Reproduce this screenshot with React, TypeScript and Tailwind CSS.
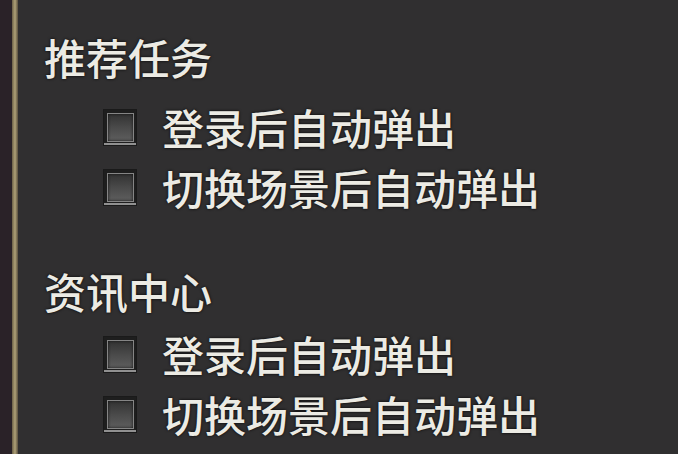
const sections = [
  { title: '推荐任务', items: ['登录后自动弹出', '切换场景后自动弹出'] },
  { title: '资讯中心', items: ['登录后自动弹出', '切换场景后自动弹出'] },
];

const Checkbox = () => (
  <span className="flex h-[37px] w-[34px] items-center justify-center border border-[#1a1a1a] bg-[#1e1e1e] shadow-[inset_0_-2px_0_#909090]">
    <span className="h-[29px] w-[27px] border border-[#858585] bg-gradient-to-b from-[#333] via-[#4a4a4a] to-[#5e5e5e] shadow-[inset_0_0_3px_#111]" />
  </span>
);

const App = () => {
  return (
    <div
      className="flex h-[454px] w-[678px] overflow-hidden bg-[#302f30] text-[#ecebe4]"
      style={{ fontFamily: '"Noto Sans CJK SC", "Noto Sans", sans-serif' }}
    >
      <div className="w-[12px] shrink-0 bg-[#2a2228]" />
      <div className="w-[6px] shrink-0 bg-gradient-to-r from-[#6b6048] via-[#b0a278] to-[#5a5040]" />
      <div className="flex flex-col pl-[26px] pt-[27px]">
        {sections.map((s, i) => (
          <div key={s.title} className={i === 0 ? '' : 'mt-[44px]'}>
            <div className="h-[60px] text-[42px] font-medium leading-[60px] [text-shadow:0_0_3px_#000]">
              {s.title}
            </div>
            <div className={i === 0 ? 'mt-[10px]' : 'mt-[3px]'}>
              {s.items.map((item) => (
                <div key={item} className="flex h-[60px] items-center pl-[59px]">
                  <Checkbox />
                  <span className="ml-[25px] text-[42px] font-medium leading-[60px] [text-shadow:0_0_3px_#000]">
                    {item}
                  </span>
                </div>
              ))}
            </div>
          </div>
        ))}
      </div>
    </div>
  );
};

export default App;
